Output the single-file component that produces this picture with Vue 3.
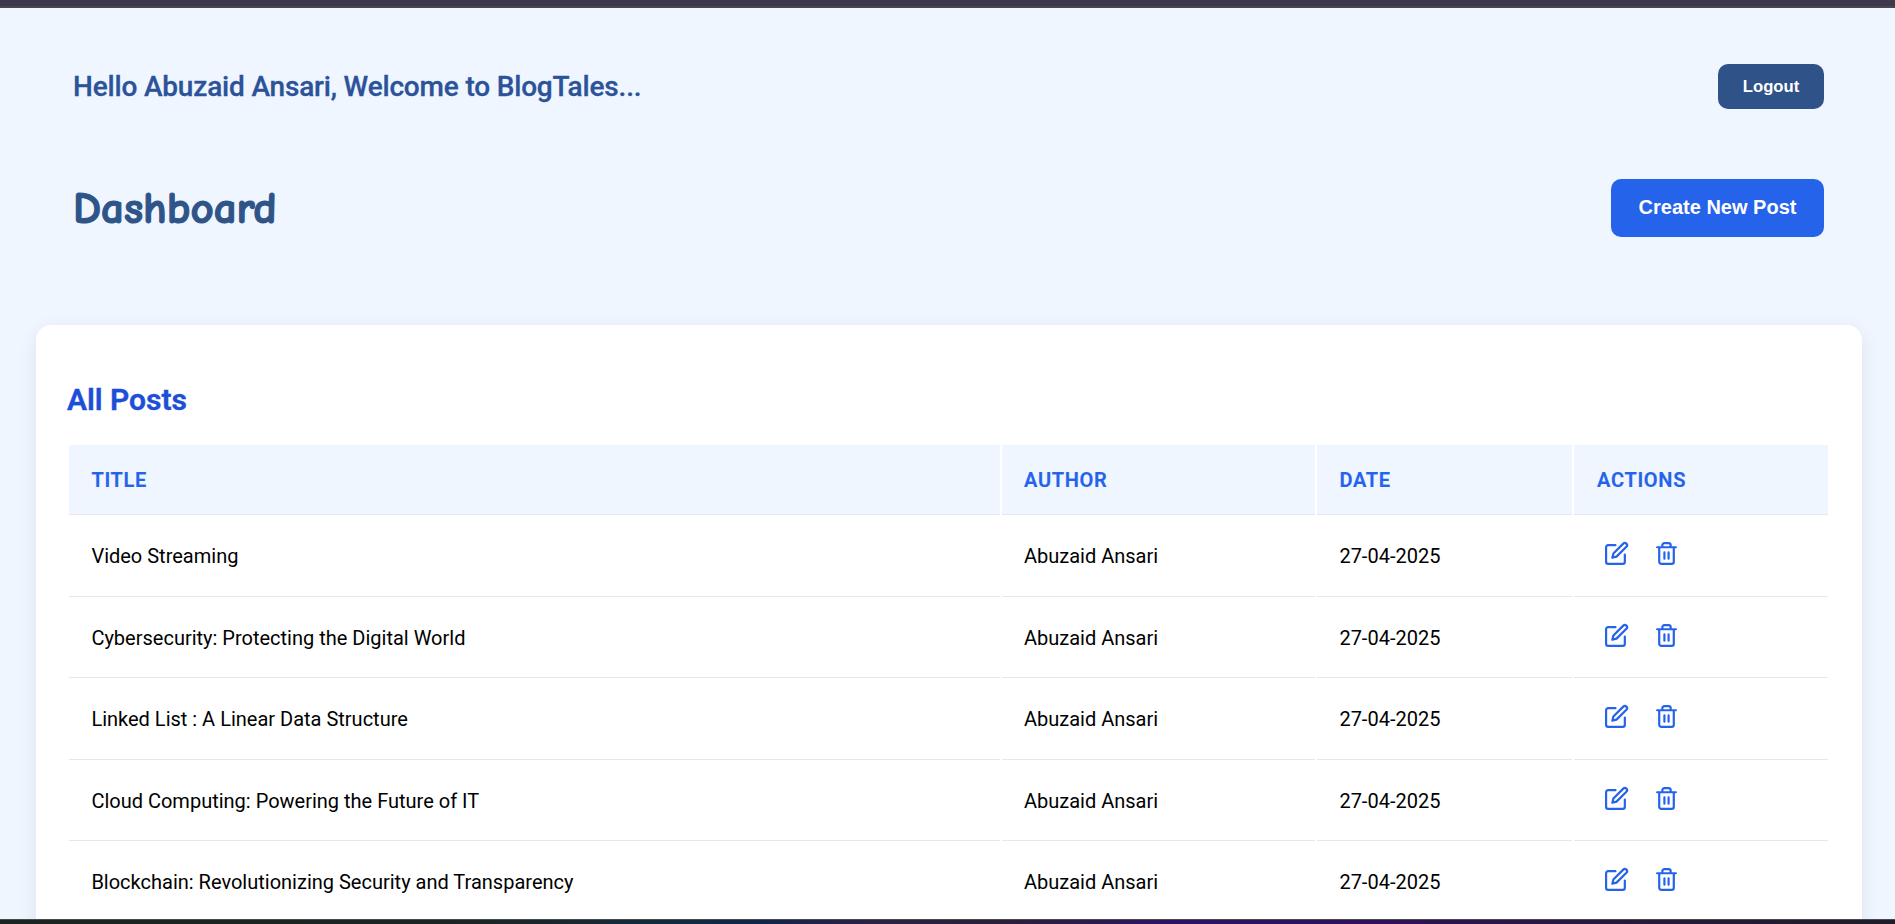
<script setup>
const titles = [
  'Video Streaming',
  'Cybersecurity: Protecting the Digital World',
  'Linked List : A Linear Data Structure',
  'Cloud Computing: Powering the Future of IT',
  'Blockchain: Revolutionizing Security and Transparency',
]
const posts = titles.map((title) => ({ title, author: 'Abuzaid Ansari', date: '27-04-2025' }))
</script>

<template>
  <div class="page">
    <div class="strip-top"></div>
    <main class="content">
      <header class="welcome">
        <h2 class="greeting">Hello Abuzaid Ansari, Welcome to BlogTales...</h2>
        <button class="logout">Logout</button>
      </header>
      <div class="heading">
        <h1 class="dashboard">Dashboard</h1>
        <button class="create">Create New Post</button>
      </div>
      <section class="card">
        <h3 class="subtitle">All Posts</h3>
        <table class="posts">
          <colgroup>
            <col class="c-title" /><col class="c-author" /><col class="c-date" /><col class="c-actions" />
          </colgroup>
          <thead>
            <tr><th>Title</th><th>Author</th><th>Date</th><th>Actions</th></tr>
          </thead>
          <tbody>
            <tr v-for="post in posts" :key="post.title">
              <td>{{ post.title }}</td>
              <td>{{ post.author }}</td>
              <td>{{ post.date }}</td>
              <td>
                <div class="actions">
                  <button class="icon" aria-label="Edit">
                    <svg viewBox="0 0 24 24">
                      <path d="M11 4H4a2 2 0 0 0-2 2v14a2 2 0 0 0 2 2h14a2 2 0 0 0 2-2v-7" />
                      <path d="M18.5 2.5a2.121 2.121 0 0 1 3 3L12 15l-4 1 1-4 9.5-9.5z" />
                    </svg>
                  </button>
                  <button class="icon" aria-label="Delete">
                    <svg viewBox="0 0 24 24">
                      <path d="M3 6h18M19 6v14a2 2 0 0 1-2 2H7a2 2 0 0 1-2-2V6M8 6V4a2 2 0 0 1 2-2h4a2 2 0 0 1 2 2v2M10 11v6M14 11v6" />
                    </svg>
                  </button>
                </div>
              </td>
            </tr>
          </tbody>
        </table>
      </section>
    </main>
    <div class="strip-bottom"></div>
  </div>
</template>

<style>
body {
  margin: 0;
  overflow: hidden;
}
</style>

<style scoped>
.page {
  height: 924px;
  display: flex;
  flex-direction: column;
  overflow: hidden;
  background: #eff6ff;
  color: #000;
  font-family: Roboto, 'Liberation Sans', sans-serif;
}
.strip-top {
  flex: 0 0 6px;
  background: #3d384c;
  border-bottom: 2px solid #48474f;
}
.strip-bottom {
  flex: 0 0 4px;
  border-top: 1px solid #454a4b;
  background: linear-gradient(90deg, #1c2422 0, #1c2423 450px, #142a3b 650px, #13244d 770px, #2b2144 870px, #2b2038 1000px, #2d1263 1170px, #2e1157 1400px, #261938 1650px, #201c2a 1895px);
}
.content {
  flex: 1;
  min-height: 0;
  overflow: hidden;
}
h1,
h2,
h3 {
  margin: 0;
}
.welcome,
.heading {
  display: flex;
  align-items: center;
  justify-content: space-between;
  padding: 0 71px 0 73px;
}
.welcome {
  height: 45px;
  margin-top: 56px;
}
.heading {
  height: 58px;
  margin-top: 70px;
}
.greeting {
  font-size: 28px;
  font-weight: 500;
  line-height: 33px;
  letter-spacing: -0.18px;
  color: #2c5299;
  -webkit-text-stroke: 0.3px #2c5299;
}
button {
  border: 0;
  padding: 0;
  border-radius: 10px;
  color: #fff;
  font-family: 'Liberation Sans', Arial, sans-serif;
  font-weight: 700;
}
.logout {
  width: 106px;
  height: 45px;
  background: #2f5288;
  font-size: 16.67px;
}
.create {
  width: 213px;
  height: 58px;
  padding-bottom: 2px;
  background: #2563eb;
  font-size: 20px;
}
.dashboard {
  color: #2f5588;
  font-family: 'Comic Neue', 'Comic Sans MS', cursive;
  font-size: 45px;
  line-height: 54px;
  font-weight: 700;
  -webkit-text-stroke: 1.2px #2f5588;
}
.card {
  margin: 88px 33px 0 36px;
  height: 700px;
  box-sizing: border-box;
  padding: 56px 32px 0 31px;
  border-radius: 15px;
  background: #fff;
  box-shadow: 0 5px 20px rgba(0, 0, 0, 0.08);
}
.subtitle {
  font-size: 30px;
  line-height: 37px;
  font-weight: 600;
  color: #1d4ed8;
  -webkit-text-stroke: 0.4px #1d4ed8;
}
.posts {
  width: 1763px;
  margin-top: 25px;
  table-layout: fixed;
  border-collapse: separate;
  border-spacing: 2px;
  font-size: 20px;
}
.c-title { width: 931px; }
.c-author { width: 313px; }
.c-date { width: 255px; }
.c-actions { width: 254px; }
th,
td {
  box-sizing: border-box;
  height: 79.5px;
  padding: 0 22.4px;
  text-align: left;
  border-bottom: 1px solid #e5e7eb;
}
th:nth-child(2),
td:nth-child(2) {
  padding-left: 22px;
}
th:last-child,
td:last-child {
  padding-left: 23px;
}
th {
  height: 70px;
  padding-top: 1px;
  background: #eff6ff;
  color: #2563eb;
  font-weight: 600;
  letter-spacing: 0.7px;
  text-transform: uppercase;
  -webkit-text-stroke: 0.2px #2563eb;
}
.actions {
  display: flex;
  gap: 25px;
  padding: 0 0 5.4px 7px;
}
.icon {
  display: flex;
  background: none;
}
.icon svg {
  width: 25px;
  height: 25px;
  fill: none;
  stroke: #2563eb;
  stroke-width: 2.1;
  stroke-linecap: round;
  stroke-linejoin: round;
}
</style>
